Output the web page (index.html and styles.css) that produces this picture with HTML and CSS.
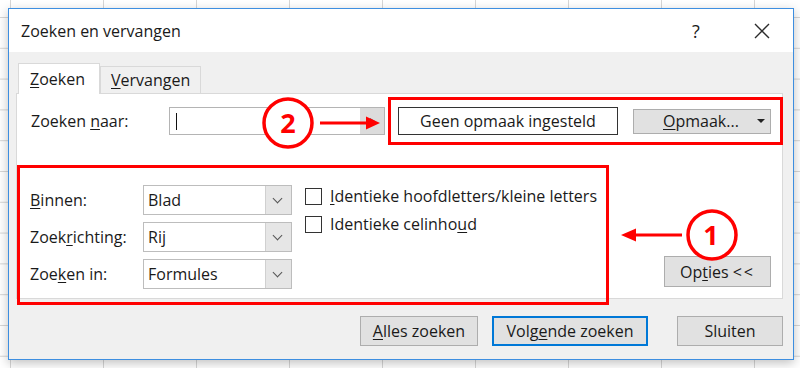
FILE: index.html
```html
<!DOCTYPE html>
<html lang="nl">
<head>
    <meta charset="UTF-8">
    <meta name="viewport" content="width=device-width, initial-scale=1.0">
    <title>Zoeken en vervangen</title>
    <link rel="stylesheet" href="styles.css">
</head>
<body>
    <div class="dialog">
        <div class="titlebar">
            <span class="title">Zoeken en vervangen</span>
            <span class="help">?</span>
            <span class="close">
                <svg width="16" height="16" viewBox="0 0 16 16"><path d="M1 1 L15 15 M15 1 L1 15" stroke="#2b2b2b" stroke-width="1.4" fill="none"/></svg>
            </span>
        </div>

        <div class="content">
            <div class="tabs">
                <div class="tab active"><u>Z</u>oeken</div>
                <div class="tab"><u>V</u>ervangen</div>
            </div>

            <div class="panel">
                <div class="find-row">
                    <label class="find-label">Zoeken <u>n</u>aar:</label>
                    <div class="combo">
                        <span class="caret"></span>
                        <span class="combo-btn"><span class="combo-tri"></span></span>
                    </div>
                    <div class="mark format-box">
                        <div class="format-preview">Geen opmaak ingesteld</div>
                        <div class="btn format-btn"><span><u>O</u>pmaak...</span><span class="drop"></span></div>
                    </div>
                </div>

                <div class="options-row">
                    <div class="mark options">
                        <div class="option-grid">
                            <label><u>B</u>innen:</label>
                            <div class="select"><span>Blad</span><span class="chev"></span></div>
                            <label>Zoek<u>r</u>ichting:</label>
                            <div class="select"><span>Rij</span><span class="chev"></span></div>
                            <label>Zoe<u>k</u>en in:</label>
                            <div class="select"><span>Formules</span><span class="chev"></span></div>
                        </div>
                        <div class="checks">
                            <div class="check"><span class="box"></span><span><u>I</u>dentieke hoofdletters/kleine letters</span></div>
                            <div class="check"><span class="box"></span><span>Identieke celinho<u>u</u>d</span></div>
                        </div>
                    </div>
                    <div class="btn options-btn"><span>Op<u>t</u>ies <span class="chevrons">&lt;&lt;</span></span></div>
                </div>
            </div>

            <div class="actions">
                <div class="btn btn-all"><span><u>A</u>lles zoeken</span></div>
                <div class="btn btn-next"><span>Volg<u>e</u>nde zoeken</span></div>
                <div class="btn btn-close">Sluiten</div>
            </div>
        </div>
    </div>

    <!-- red callouts drawn over the dialog -->
    <svg class="callouts" width="800" height="368" viewBox="0 0 800 368">
        <circle cx="288" cy="123" r="24" fill="#fff" stroke="#f00" stroke-width="3.5"/>
        <text x="288" y="133" class="callout-num">2</text>
        <line x1="320" y1="123" x2="368" y2="123" stroke="#f00" stroke-width="3"/>
        <polygon points="380,123 366,116.5 366,129.5" fill="#f00"/>

        <circle cx="712" cy="235" r="24" fill="#fff" stroke="#f00" stroke-width="3.5"/>
        <text x="711" y="245" class="callout-num">1</text>
        <line x1="682" y1="235" x2="634" y2="235" stroke="#f00" stroke-width="3"/>
        <polygon points="621,235 636,228.5 636,241.5" fill="#f00"/>
    </svg>
</body>
</html>
```

FILE: styles.css
```css
body {
    margin: 0;
    width: 800px;
    height: 368px;
    overflow: hidden;
    font-family: "Open Sans", "Noto Sans", sans-serif;
    font-size: 16px;
    color: #1a1a1a;
    background-color: #fff;
    background-image:
        linear-gradient(to right, #d6d6d6 1px, transparent 1px),
        linear-gradient(to bottom, #d6d6d6 1px, transparent 1px);
    background-size: 93px 30.8px;
    background-position: 10px 17px;
    position: relative;
}
u {
    text-decoration-thickness: 1px;
    text-underline-offset: 2px;
}
.dialog {
    box-sizing: border-box;
    margin: 8px 0 0 8px;
    width: 786px;
    height: 352px;
    border: 1px solid #3d8ee0;
    background: #f0f0f0;
    box-shadow: 0 3px 10px rgba(0, 0, 0, 0.25);
    display: flex;
    flex-direction: column;
}
.titlebar {
    height: 43px;
    background: #fff;
    display: flex;
    align-items: center;
    padding-left: 12px;
}
.title {
    flex: 1;
    font-size: 16px;
}
.help {
    width: 30px;
    text-align: center;
    font-size: 18px;
    margin-right: 28px;
}
.close {
    width: 46px;
    margin-right: 8px;
    display: flex;
    justify-content: center;
}
.content {
    flex: 1;
    padding: 11px 10px 0 7px;
}
.tabs {
    display: flex;
    align-items: flex-end;
    height: 30px;
    margin-left: 2px;
}
.tab {
    box-sizing: border-box;
    height: 27px;
    width: 101px;
    padding-left: 10px;
    border: 1px solid #d9d9d9;
    border-bottom: none;
    display: flex;
    align-items: center;
}
.tab.active {
    width: 82px;
    height: 31px;
    margin-bottom: -1px;
    background: #fff;
    position: relative;
    z-index: 1;
    padding-left: 11px;
}
.panel {
    box-sizing: border-box;
    height: 206px;
    width: 767px;
    border: 1px solid #d9d9d9;
    background: #fff;
}
.mark {
    box-sizing: border-box;
    border: 3px solid #f00;
    flex-shrink: 0;
}
.find-row {
    display: flex;
    align-items: center;
    margin-top: 3px;
    height: 48px;
}
.find-label {
    flex: 0 0 138px;
    margin-left: 14px;
}
.combo {
    box-sizing: border-box;
    flex: 0 0 216px;
    height: 28px;
    border: 1px solid #b4b4b4;
    display: flex;
    align-items: center;
}
.caret {
    width: 1px;
    height: 17px;
    background: #111;
    margin-left: 6px;
}
.combo-btn {
    margin-left: auto;
    width: 24px;
    height: 100%;
    background: #dcdcdc;
    display: flex;
    align-items: center;
    justify-content: center;
}
.combo-tri {
    width: 0;
    height: 0;
    border-top: 3px solid transparent;
    border-bottom: 3px solid transparent;
    border-left: 5px solid #666;
}
.format-box {
    width: 395px;
    height: 48px;
    margin-left: 3px;
    display: flex;
    align-items: center;
    padding-left: 7px;
    gap: 15px;
}
.format-preview {
    box-sizing: border-box;
    width: 220px;
    height: 28px;
    border: 1.5px solid #333;
    display: flex;
    align-items: center;
    justify-content: center;
}
.btn {
    box-sizing: border-box;
    background: #e1e1e1;
    border: 1px solid #adadad;
    display: flex;
    align-items: center;
    justify-content: center;
}
.format-btn {
    width: 138px;
    height: 25px;
    justify-content: flex-start;
    padding-left: 29px;
}
.drop {
    margin-left: auto;
    margin-right: 5px;
    width: 0;
    height: 0;
    border-left: 4px solid transparent;
    border-right: 4px solid transparent;
    border-top: 4px solid #222;
}
.options-row {
    display: flex;
    margin-top: 20px;
}
.options {
    width: 592px;
    height: 140px;
    display: flex;
    padding: 17px 0 0 10px;
}
.option-grid {
    display: grid;
    grid-template-columns: 113px 149px;
    grid-auto-rows: 30px;
    row-gap: 7px;
    align-items: center;
}
.select {
    box-sizing: border-box;
    height: 30px;
    border: 1px solid #bdbdbd;
    display: flex;
    align-items: center;
    padding-left: 4px;
}
.chev {
    margin-left: auto;
    width: 25px;
    height: 100%;
    background: #e6e6e6;
    border-left: 1px solid #d0d0d0;
    position: relative;
}
.chev::after {
    content: "";
    position: absolute;
    left: 8px;
    top: 9px;
    width: 6px;
    height: 6px;
    border-right: 1.3px solid #555;
    border-bottom: 1.3px solid #555;
    transform: rotate(45deg);
}
.checks {
    margin-left: 13px;
    margin-top: -3px;
}
.check {
    height: 28px;
    display: flex;
    align-items: center;
    gap: 8px;
}
.box {
    box-sizing: border-box;
    width: 17px;
    height: 17px;
    border: 1px solid #333;
    background: #fff;
}
.options-btn {
    width: 107px;
    height: 31px;
    margin-left: auto;
    margin-right: 11px;
    align-self: flex-end;
    margin-bottom: 18px;
}
.chevrons {
    letter-spacing: 2px;
}
.actions {
    display: flex;
    justify-content: flex-end;
    margin-top: 17px;
}
.actions .btn {
    height: 30px;
}
.btn-all {
    width: 118px;
}
.btn-next {
    width: 156px;
    margin-left: 14px;
    border: 2px solid #0078d7;
}
.btn-close {
    width: 106px;
    margin-left: 29px;
}
.callouts {
    position: absolute;
    left: 0;
    top: 0;
    pointer-events: none;
}
.callout-num {
    font-family: "Open Sans", "Liberation Sans", sans-serif;
    font-weight: 700;
    font-size: 27px;
    fill: #f00;
    text-anchor: middle;
}
```
